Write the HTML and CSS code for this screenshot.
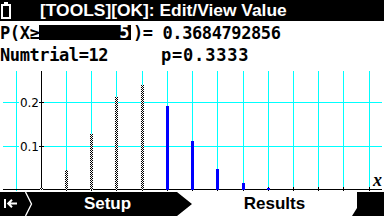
FILE: index.html
```html
<!DOCTYPE html>
<html>
<head>
<meta charset="utf-8">
<link rel="stylesheet" href="styles.css">
</head>
<body>
<div class="screen">
  <header class="title">
    <svg class="battery" width="12" height="19" viewBox="0 0 12 19">
      <rect x="4" y="1" width="4" height="2" fill="#fff"/>
      <rect x="2" y="4" width="8" height="13" fill="none" stroke="#fff" stroke-width="2"/>
    </svg>
    <span class="title-text">[TOOLS][OK]: Edit/View Value</span>
  </header>
  <div class="line line-prob">
    <span class="lhs">P(X≥</span><span class="field">5</span><span class="rhs">)= 0.3684792856</span>
  </div>
  <div class="line line-params">
    <span class="param-n">Numtrial=12</span><span class="param-p">p=0.3333</span>
  </div>
  <div class="graph">
    <svg class="plot" width="384" height="126" viewBox="0 66 384 126" shape-rendering="crispEdges">
      <defs>
        <pattern id="dots" width="2" height="2" patternUnits="userSpaceOnUse">
          <rect x="0" y="0" width="2" height="2" fill="#fff"/>
          <rect x="0" y="0" width="1" height="1" fill="#000"/>
          <rect x="1" y="1" width="1" height="1" fill="#000"/>
        </pattern>
      </defs>
      <path class="grid" d="M16.5 71V191M66.5 71V191M91.5 71V191M116.5 71V191M142.5 71V191M167.5 71V191M192.5 71V191M217.5 71V191M243.5 71V191M268.5 71V191M293.5 71V191M318.5 71V191M343.5 71V191M369.5 71V191M3 102.5H382M3 146.5H382"/>
      <path class="axis" d="M3 189.5H382M41.5 71V190M39 102.5H44M39 146.5H44M66.5 187V191M91.5 187V191M116.5 187V191M142.5 187V191M167.5 187V191M192.5 187V191M217.5 187V191M243.5 187V191M268.5 187V191M293.5 187V191M318.5 187V191M343.5 187V191M369.5 187V191"/>
      <rect x="19" y="97" width="20" height="11" fill="#fff"/>
      <rect x="19" y="141" width="20" height="11" fill="#fff"/>
      <text class="ylabel" x="39" y="106.5">0.2</text>
      <text class="ylabel" x="39" y="150.5">0.1</text>
      <rect x="40" y="187" width="3" height="3" fill="url(#dots)"/>
      <rect x="65" y="170" width="3" height="20" fill="url(#dots)"/>
      <rect x="90" y="134" width="3" height="56" fill="url(#dots)"/>
      <rect x="115" y="97" width="3" height="93" fill="url(#dots)"/>
      <rect x="141" y="85" width="3" height="105" fill="url(#dots)"/>
      <rect class="bar" x="166" y="106" width="3" height="84"/>
      <rect class="bar" x="191" y="141" width="3" height="49"/>
      <rect class="bar" x="216" y="169" width="3" height="21"/>
      <rect class="bar" x="242" y="183" width="3" height="7"/>
      <rect class="bar" x="267" y="188" width="3" height="2"/>
      <text class="xlabel" x="373" y="186">x</text>
    </svg>
  </div>
  <nav class="menu">
    <div class="tab tab-back">
      <svg width="14" height="10" viewBox="0 0 14 10">
        <rect x="0" y="0" width="2" height="9" fill="#fff"/>
        <path d="M4 4.5H13M8 0.8L4.2 4.5L8 8.2" fill="none" stroke="#fff" stroke-width="2"/>
      </svg>
    </div>
    <svg class="sep" width="8" height="24" viewBox="0 0 8 24">
      <path d="M0.5 0L6.5 12L0.5 24" fill="none" stroke="#fff" stroke-width="1.3"/>
    </svg>
    <div class="tab tab-setup">Setup</div>
    <div class="tab tab-results">Results</div>
  </nav>
</div>
</body>
</html>
```
FILE: styles.css
```css
html, body {
  margin: 0;
  padding: 0;
  background: #fff;
}

.screen {
  width: 384px;
  height: 216px;
  overflow: hidden;
  display: flex;
  flex-direction: column;
  background: #fff;
}

.title {
  height: 21px;
  background: #000;
  color: #fff;
  display: flex;
  align-items: center;
  flex-shrink: 0;
}

.battery {
  margin-left: 0;
  display: block;
}

.title-text {
  margin-left: 28px;
  font: bold 17.4px "Liberation Sans", sans-serif;
  white-space: nowrap;
}

.line {
  display: flex;
  align-items: center;
  font: bold 17px "DejaVu Sans Mono", monospace;
  letter-spacing: -0.4px;
  color: #000;
  white-space: pre;
  flex-shrink: 0;
}

.line-prob {
  height: 23px;
}

.lhs {
  width: 39px;
  overflow: hidden;
}

.field {
  width: 92px;
  height: 15px;
  line-height: 15px;
  background: #000;
  color: #fff;
  text-align: right;
  padding-right: 2px;
  box-sizing: border-box;
}

.rhs {
  margin-left: 2px;
}

.line-params {
  height: 22px;
}

.param-n {
  width: 161px;
}

.param-p {
  letter-spacing: 0.8px;
}

.graph {
  height: 126px;
  flex-shrink: 0;
}

.plot {
  display: block;
}

.grid {
  stroke: #00ffff;
  stroke-width: 1;
  fill: none;
}

.axis {
  stroke: #000;
  stroke-width: 1;
  fill: none;
}

.bar {
  fill: #0000ff;
}

.ylabel {
  font: 12px "DejaVu Sans", sans-serif;
  fill: #000;
  text-anchor: end;
}

.xlabel {
  font: italic bold 18px "Liberation Serif", serif;
  fill: #000;
}

.menu {
  height: 24px;
  background: #000;
  display: flex;
  flex-shrink: 0;
  font: bold 17px "Liberation Sans", sans-serif;
  line-height: 24px;
}

.tab {
  height: 24px;
  text-align: center;
  box-sizing: border-box;
}

.tab-back {
  width: 25px;
  padding-left: 4px;
  display: flex;
  align-items: center;
}

.sep {
  display: block;
  flex-shrink: 0;
}

.tab-setup {
  width: 159px;
  padding-right: 10px;
  color: #fff;
}

.tab-results {
  width: 180px;
  margin-left: -15px;
  padding-left: 15px;
  background: #fff;
  color: #000;
  clip-path: polygon(0 0, 180px 0, 180px 16px, 175px 24px, 0 24px, 15px 12px);
}
```
